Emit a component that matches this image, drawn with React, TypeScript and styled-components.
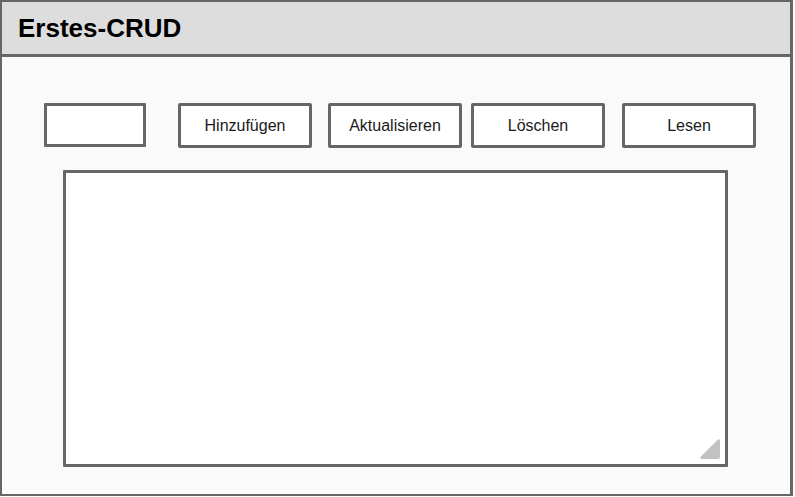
import React from "react";
import styled, { createGlobalStyle } from "styled-components";

const Global = createGlobalStyle`
  html, body { margin: 0; padding: 0; background: #ffffff; }
  body { font-family: "Liberation Sans", Arial, sans-serif; }
  * { box-sizing: border-box; }
`;

const Frame = styled.div`
  width: 793px;
  height: 496px;
  border: 2px solid #666666;
  border-right-width: 3px;
  background: #fafafa;
  display: flex;
  flex-direction: column;
`;

const Header = styled.header`
  height: 55px;
  flex: none;
  background: #dddddd;
  border-bottom: 3px solid #666666;
  display: flex;
  align-items: center;
  padding-left: 16px;
  padding-top: 1px;
`;

const Title = styled.h1`
  margin: 0;
  font-family: "Liberation Sans", Arial, sans-serif;
  font-weight: 700;
  font-size: 26px;
  color: #000000;
`;

const Main = styled.main`
  flex: 1;
  padding: 46px 0 0 42px;
  display: flex;
  flex-direction: column;
`;

const Toolbar = styled.div`
  display: flex;
  align-items: flex-start;
  height: 45px;
`;

const Field = styled.input`
  width: 102px;
  height: 44px;
  border: 3px solid #666666;
  border-radius: 1px;
  background: #ffffff;
  outline: none;
  padding: 0 6px;
  font-family: "Liberation Sans", Arial, sans-serif;
  font-size: 16px;
`;

const Button = styled.button<{ $gap: number }>`
  margin-left: ${(p) => p.$gap}px;
  width: 134px;
  height: 45px;
  border: 3px solid #666666;
  border-radius: 2px;
  background: #ffffff;
  font-family: "Liberation Sans", Arial, sans-serif;
  font-size: 16px;
  color: #1a1a1a;
  padding: 0;
  padding-top: 1px;
  cursor: pointer;
`;

const AreaWrap = styled.div`
  position: relative;
  margin: 22px 0 0 19px;
  width: 665px;
  height: 297px;
`;

const Area = styled.textarea`
  width: 100%;
  height: 100%;
  border: 3px solid #666666;
  border-radius: 1px;
  background: #ffffff;
  resize: none;
  outline: none;
  display: block;
  font-family: "Liberation Sans", Arial, sans-serif;
  font-size: 16px;
`;

const Grip = styled.svg`
  position: absolute;
  right: 7px;
  bottom: 7px;
  width: 22px;
  height: 22px;
  pointer-events: none;
`;

export default function App() {
  return (
    <>
      <Global />
      <Frame>
        <Header>
          <Title>Erstes-CRUD</Title>
        </Header>
        <Main>
          <Toolbar>
            <Field aria-label="Eingabe" />
            <Button $gap={32}>Hinzufügen</Button>
            <Button $gap={16}>Aktualisieren</Button>
            <Button $gap={9}>Löschen</Button>
            <Button $gap={17}>Lesen</Button>
          </Toolbar>
          <AreaWrap>
            <Area aria-label="Ausgabe" />
            <Grip viewBox="0 0 22 22">
              <path
                d="M19 1.5 Q21 0.5 21 3 L21 19 Q21 21 19 21 L3 21 Q0.5 21 1.5 19 Z"
                fill="#c2c2c2"
              />
            </Grip>
          </AreaWrap>
        </Main>
      </Frame>
    </>
  );
}
